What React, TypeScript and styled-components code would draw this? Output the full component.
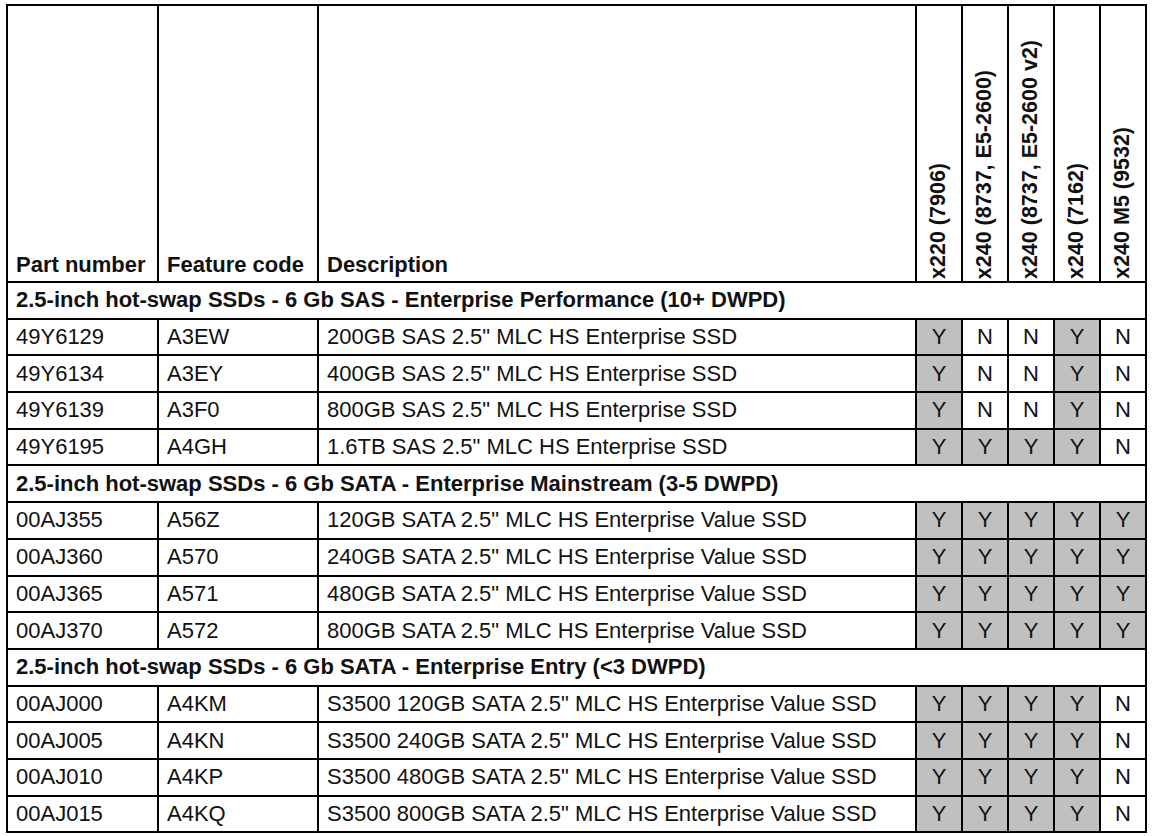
import styled, { createGlobalStyle } from "styled-components";

const GlobalStyle = createGlobalStyle`
  body {
    margin: 0;
    background: #ffffff;
    font-family: "Liberation Sans", Arial, sans-serif;
    color: #111111;
  }
`;

const Page = styled.div`
  padding: 4px 0 0 6px;
`;

const Table = styled.table`
  border-collapse: collapse;
  table-layout: fixed;
  width: 1141px;
  font-size: 22px;
`;

const HeadCell = styled.th`
  height: 270px;
  border: 2px solid #000;
  padding: 0 8px 5px 8px;
  text-align: left;
  vertical-align: bottom;
  font-weight: bold;
  white-space: nowrap;
  line-height: 1;
`;

const RotatedHead = styled.th`
  height: 270px;
  border: 2px solid #000;
  padding: 0 0 2px 0;
  vertical-align: bottom;
  text-align: center;
  font-weight: bold;
  font-size: 21.5px;
  line-height: 1;
`;

const Vertical = styled.div`
  writing-mode: vertical-rl;
  transform: rotate(180deg);
  white-space: nowrap;
  margin: 0 auto;
`;

const SectionCell = styled.td`
  height: 34.7px;
  border: 2px solid #000;
  padding: 0 8px;
  font-weight: bold;
  white-space: nowrap;
  line-height: 1;
`;

const Cell = styled.td`
  height: 34.7px;
  border: 2px solid #000;
  padding: 0 8px;
  white-space: nowrap;
  line-height: 1;
`;

const FlagCell = styled.td<{ $on: boolean }>`
  height: 34.7px;
  border: 2px solid #000;
  padding: 0;
  text-align: center;
  line-height: 1;
  background: ${(p) => (p.$on ? "#c0c0c0" : "#ffffff")};
`;

const systems = [
  "x220 (7906)",
  "x240 (8737, E5-2600)",
  "x240 (8737, E5-2600 v2)",
  "x240 (7162)",
  "x240 M5 (9532)",
];

type Row = [string, string, string, string];

const sections: { title: string; rows: Row[] }[] = [
  {
    title: "2.5-inch hot-swap SSDs - 6 Gb SAS - Enterprise Performance (10+ DWPD)",
    rows: [
      ["49Y6129", "A3EW", "200GB SAS 2.5\" MLC HS Enterprise SSD", "YNNYN"],
      ["49Y6134", "A3EY", "400GB SAS 2.5\" MLC HS Enterprise SSD", "YNNYN"],
      ["49Y6139", "A3F0", "800GB SAS 2.5\" MLC HS Enterprise SSD", "YNNYN"],
      ["49Y6195", "A4GH", "1.6TB SAS 2.5\" MLC HS Enterprise SSD", "YYYYN"],
    ],
  },
  {
    title: "2.5-inch hot-swap SSDs - 6 Gb SATA - Enterprise Mainstream (3-5 DWPD)",
    rows: [
      ["00AJ355", "A56Z", "120GB SATA 2.5\" MLC HS Enterprise Value SSD", "YYYYY"],
      ["00AJ360", "A570", "240GB SATA 2.5\" MLC HS Enterprise Value SSD", "YYYYY"],
      ["00AJ365", "A571", "480GB SATA 2.5\" MLC HS Enterprise Value SSD", "YYYYY"],
      ["00AJ370", "A572", "800GB SATA 2.5\" MLC HS Enterprise Value SSD", "YYYYY"],
    ],
  },
  {
    title: "2.5-inch hot-swap SSDs - 6 Gb SATA - Enterprise Entry (<3 DWPD)",
    rows: [
      ["00AJ000", "A4KM", "S3500 120GB SATA 2.5\" MLC HS Enterprise Value SSD", "YYYYN"],
      ["00AJ005", "A4KN", "S3500 240GB SATA 2.5\" MLC HS Enterprise Value SSD", "YYYYN"],
      ["00AJ010", "A4KP", "S3500 480GB SATA 2.5\" MLC HS Enterprise Value SSD", "YYYYN"],
      ["00AJ015", "A4KQ", "S3500 800GB SATA 2.5\" MLC HS Enterprise Value SSD", "YYYYN"],
    ],
  },
];

const App = () => {
  return (
    <Page>
      <GlobalStyle />
      <Table>
        <colgroup>
          <col style={{ width: 151 }} />
          <col style={{ width: 160 }} />
          <col style={{ width: 598 }} />
          {systems.map((s) => (
            <col key={s} style={{ width: 46 }} />
          ))}
        </colgroup>
        <thead>
          <tr>
            <HeadCell>Part number</HeadCell>
            <HeadCell>Feature code</HeadCell>
            <HeadCell>Description</HeadCell>
            {systems.map((s) => (
              <RotatedHead key={s}>
                <Vertical>{s}</Vertical>
              </RotatedHead>
            ))}
          </tr>
        </thead>
        <tbody>
          {sections.map((sec) => [
            <tr key={sec.title}>
              <SectionCell colSpan={8}>{sec.title}</SectionCell>
            </tr>,
            ...sec.rows.map(([part, code, desc, flags]) => (
              <tr key={part}>
                <Cell>{part}</Cell>
                <Cell>{code}</Cell>
                <Cell>{desc}</Cell>
                {flags.split("").map((f, i) => (
                  <FlagCell key={i} $on={f === "Y"}>
                    {f}
                  </FlagCell>
                ))}
              </tr>
            )),
          ])}
        </tbody>
      </Table>
    </Page>
  );
};

export default App;
